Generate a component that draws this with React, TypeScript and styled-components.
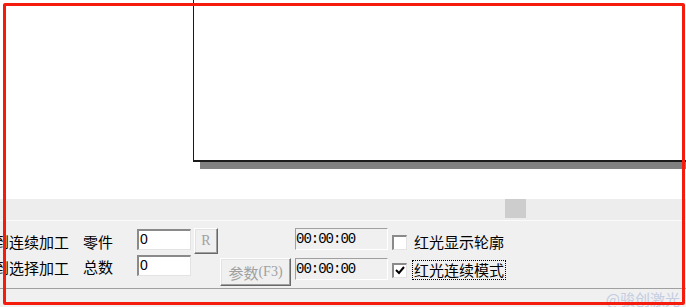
import { FunctionComponent } from "react";
import styled, { createGlobalStyle } from "styled-components";

const GlobalStyle = createGlobalStyle`
  html, body {
    margin: 0;
    padding: 0;
    background: #ffffff;
    overflow: hidden;
  }
  * {
    box-sizing: border-box;
  }
`;

const cjk = `"Noto Sans CJK SC", "Noto Sans", sans-serif`;

const Screen = styled.div`
  position: relative;
  width: 686px;
  height: 307px;
  display: flex;
  flex-direction: column;
  overflow: hidden;
  background: #f0f0f0;
  font-family: ${cjk};
  color: #000;
`;

const Canvas = styled.div`
  height: 199px;
  flex-shrink: 0;
  background: #ffffff;
  overflow: hidden;
  padding-left: 193px;
`;

const Sheet = styled.div`
  margin-top: -10px;
  width: 520px;
  height: 172px;
  background: #ffffff;
  border-left: 1px solid #1a1a1a;
  border-bottom: 2px solid #1a1a1a;
  box-shadow: 7px 7px 0 #808080;
`;

const ScrollBand = styled.div`
  height: 22px;
  flex-shrink: 0;
  background: #ededed;
  border-bottom: 1px solid #fbfbfb;
  display: flex;
  align-items: flex-start;
  padding-left: 505px;
`;

const Thumb = styled.div`
  width: 21px;
  height: 19px;
  background: #cdcdcd;
`;

const Panel = styled.div`
  height: 68px;
  flex-shrink: 0;
  display: flex;
  flex-direction: row;
  align-items: flex-start;
  border-bottom: 1px solid #a0a0a0;
  font-size: 15px;
`;

const ModeCol = styled.div`
  width: 83px;
  display: flex;
  flex-direction: column;
  gap: 8px;
  padding-top: 12px;
`;

const ModeLabel = styled.div`
  margin-left: -6px;
  line-height: 18px;
  white-space: nowrap;
`;

const CountGrid = styled.div`
  display: grid;
  grid-template-columns: 54px 54px;
  grid-auto-rows: 21px;
  row-gap: 5px;
  padding-top: 8px;
`;

const CountLabel = styled.div<{ $shift: number }>`
  line-height: 18px;
  padding-top: ${(p) => p.$shift}px;
  white-space: nowrap;
`;

const NumberBox = styled.div`
  width: 54px;
  height: 21px;
  background: #ffffff;
  border-top: 2px solid #8a8a8a;
  border-left: 2px solid #8a8a8a;
  border-right: 1px solid #e3e3e3;
  border-bottom: 1px solid #e3e3e3;
  font-family: "Liberation Sans", Arial, sans-serif;
  font-size: 14px;
  line-height: 17px;
  padding-left: 1px;
`;

const ButtonCol = styled.div`
  width: 97px;
  margin-left: 3px;
  display: flex;
  flex-direction: column;
  gap: 4px;
  padding-top: 7px;
`;

const OldButton = styled.div<{ $w: number; $h: number; $end?: boolean }>`
  width: ${(p) => p.$w}px;
  height: ${(p) => p.$h}px;
  align-self: ${(p) => (p.$end ? "flex-end" : "flex-start")};
  display: flex;
  align-items: center;
  justify-content: center;
  background: #f0f0f0;
  border-top: 1px solid #ffffff;
  border-left: 1px solid #ffffff;
  border-right: 1px solid #696969;
  border-bottom: 1px solid #696969;
  box-shadow: inset -1px -1px 0 #a0a0a0, inset 1px 1px 0 #e3e3e3;
  color: #a0a0a0;
  font-size: 15px;
  white-space: nowrap;
`;

const SerifPart = styled.span`
  font-family: "Liberation Serif", "Times New Roman", serif;
  font-size: 14px;
`;

const TimeCol = styled.div`
  width: 93px;
  margin-left: 4px;
  display: flex;
  flex-direction: column;
  gap: 8px;
  padding-top: 7px;
`;

const TimeBox = styled.div`
  height: 22px;
  background: #f0f0f0;
  border-top: 1px solid #a0a0a0;
  border-left: 1px solid #a0a0a0;
  border-right: 1px solid #ffffff;
  border-bottom: 1px solid #ffffff;
  font-family: "Liberation Mono", "DejaVu Sans Mono", monospace;
  font-size: 14px;
  letter-spacing: -1px;
  line-height: 20px;
  padding-left: 0;
`;

const CheckCol = styled.div`
  margin-left: 4px;
  display: flex;
  flex-direction: column;
  gap: 8px;
  padding-top: 11px;
`;

const CheckRow = styled.div`
  height: 20px;
  display: flex;
  flex-direction: row;
  align-items: center;
  gap: 6px;
`;

const Box = styled.div`
  width: 15px;
  height: 15px;
  background: #ffffff;
  border-top: 2px solid #8a8a8a;
  border-left: 2px solid #8a8a8a;
  border-right: 1px solid #e3e3e3;
  border-bottom: 1px solid #e3e3e3;
  display: flex;
  align-items: center;
  justify-content: center;
`;

const CheckLabel = styled.span<{ $focused?: boolean }>`
  line-height: 18px;
  padding: 0 1px;
  white-space: nowrap;
  outline: ${(p) => (p.$focused ? "1px dotted #000" : "none")};
`;

const Footer = styled.div`
  flex: 1;
  display: flex;
  justify-content: flex-end;
  padding-right: 6px;
  overflow: hidden;
`;

const Watermark = styled.span`
  font-size: 15px;
  line-height: 20px;
  color: #c3cde2;
  white-space: nowrap;
`;

const RedFrame = styled.div`
  position: absolute;
  left: 3px;
  top: 3px;
  width: 682px;
  height: 302px;
  border: 3px solid #f61c0d;
  border-radius: 2px;
  pointer-events: none;
`;

const Tick: FunctionComponent = () => (
  <svg width="10" height="9" viewBox="0 0 10 9">
    <path d="M1 4 L4 7 L9 1" fill="none" stroke="#000" strokeWidth="2" />
  </svg>
);

const App: FunctionComponent = () => {
  return (
    <>
      <GlobalStyle />
      <Screen>
        <Canvas>
          <Sheet />
        </Canvas>
        <ScrollBand>
          <Thumb />
        </ScrollBand>
        <Panel>
          <ModeCol>
            <ModeLabel>到连续加工</ModeLabel>
            <ModeLabel>到选择加工</ModeLabel>
          </ModeCol>
          <CountGrid>
            <CountLabel $shift={4}>零件</CountLabel>
            <NumberBox>0</NumberBox>
            <CountLabel $shift={3}>总数</CountLabel>
            <NumberBox>0</NumberBox>
          </CountGrid>
          <ButtonCol>
            <OldButton $w={24} $h={26}>
              <SerifPart>R</SerifPart>
            </OldButton>
            <OldButton $w={71} $h={28} $end>
              参数<SerifPart>(F3)</SerifPart>
            </OldButton>
          </ButtonCol>
          <TimeCol>
            <TimeBox>00:00:00</TimeBox>
            <TimeBox>00:00:00</TimeBox>
          </TimeCol>
          <CheckCol>
            <CheckRow>
              <Box />
              <CheckLabel>红光显示轮廓</CheckLabel>
            </CheckRow>
            <CheckRow>
              <Box>
                <Tick />
              </Box>
              <CheckLabel $focused>红光连续模式</CheckLabel>
            </CheckRow>
          </CheckCol>
        </Panel>
        <Footer>
          <Watermark>@骏创激光</Watermark>
        </Footer>
        <RedFrame />
      </Screen>
    </>
  );
};

export default App;
